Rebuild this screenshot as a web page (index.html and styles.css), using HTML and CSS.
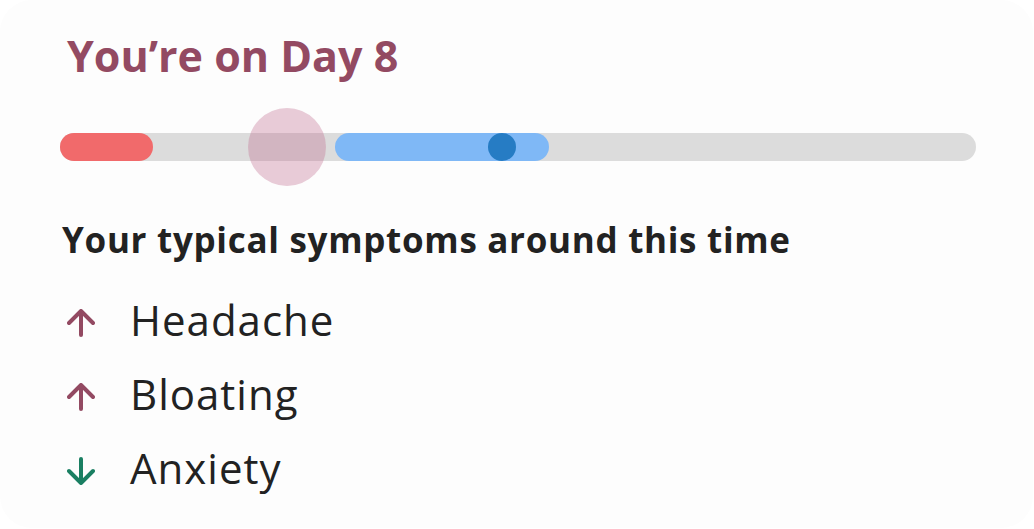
FILE: index.html
```html
<!DOCTYPE html>
<html lang="en">
<head>
<meta charset="utf-8">
<title>Cycle day</title>
<link rel="stylesheet" href="styles.css">
</head>
<body>
<main class="card">
  <h1 class="title">You’re on Day 8</h1>
  <div class="track">
    <div class="seg seg-period" style="left:0;width:93px"></div>
    <div class="seg seg-fertile" style="left:275px;width:214px"></div>
    <div class="dot" style="left:428px"></div>
    <div class="today" style="left:188px"></div>
  </div>
  <h2 class="subtitle">Your typical symptoms around this time</h2>
  <ul class="symptoms">
    <li class="symptom">
      <svg class="arrow arrow-up" viewBox="0 0 28 28" width="28" height="28" aria-hidden="true"><path d="M14 26V2M2 14L14 2L26 14"/></svg>
      <span>Headache</span>
    </li>
    <li class="symptom">
      <svg class="arrow arrow-up" viewBox="0 0 28 28" width="28" height="28" aria-hidden="true"><path d="M14 26V2M2 14L14 2L26 14"/></svg>
      <span>Bloating</span>
    </li>
    <li class="symptom">
      <svg class="arrow arrow-down" viewBox="0 0 28 28" width="28" height="28" aria-hidden="true"><path d="M14 2V26M2 14L14 26L26 14"/></svg>
      <span>Anxiety</span>
    </li>
  </ul>
</main>
</body>
</html>
```
FILE: styles.css
```css
html, body {
  margin: 0;
  padding: 0;
  background: #ffffff;
}

body {
  font-family: "Open Sans", "DejaVu Sans", sans-serif;
  color: #222222;
}

.card {
  box-sizing: border-box;
  width: 1033px;
  height: 528px;
  background: #fdfdfd;
  border-radius: 32px;
  padding: 27px 57px 0 60px;
  display: flex;
  flex-direction: column;
}

.title {
  margin: 0 0 0 7px;
  font-size: 43px;
  line-height: 58px;
  font-weight: 700;
  color: #934a62;
}

.track {
  position: relative;
  margin-top: 48px;
  height: 28px;
  border-radius: 14px;
  background: #dcdcdc;
}

.seg {
  position: absolute;
  top: 0;
  height: 28px;
  border-radius: 14px;
}

.seg-period {
  background: #f16a6b;
}

.seg-fertile {
  background: #7fb8f6;
}

.dot {
  position: absolute;
  top: 0;
  width: 28px;
  height: 28px;
  border-radius: 50%;
  background: #267cc4;
}

.today {
  position: absolute;
  top: -25px;
  width: 78px;
  height: 78px;
  border-radius: 50%;
  background: rgba(195, 115, 146, 0.36);
}

.subtitle {
  margin: 55px 0 0 2px;
  font-size: 35px;
  line-height: 48px;
  font-weight: 700;
  color: #222222;
  letter-spacing: 0.7px;
}

.symptoms {
  list-style: none;
  margin: 19px 0 0;
  padding: 0;
  display: flex;
  flex-direction: column;
}

.symptom {
  display: flex;
  align-items: center;
  gap: 35px;
  height: 74px;
  padding-left: 7px;
  font-size: 42px;
  line-height: 74px;
  font-weight: 400;
  color: #222222;
  letter-spacing: 1px;
}

.arrow {
  flex: none;
  margin-top: 6px;
  fill: none;
  stroke-width: 4;
  stroke-linecap: round;
  stroke-linejoin: round;
}

.arrow-up {
  stroke: #934a62;
}

.arrow-down {
  stroke: #1a7f62;
}
```
